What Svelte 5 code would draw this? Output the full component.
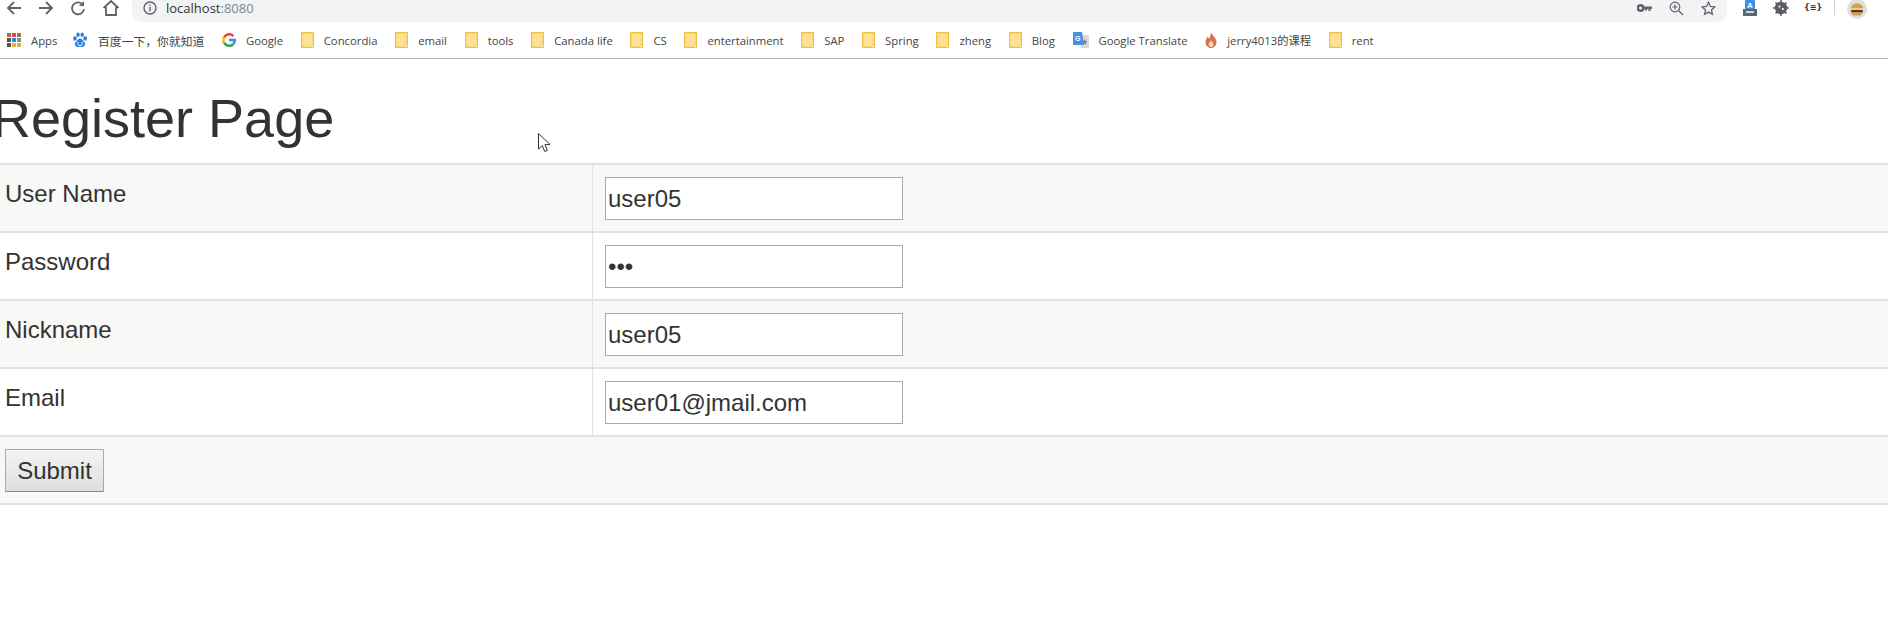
<script>
  const bookmarks = [
    { label: 'Apps', icon: 'apps' },
    { label: '百度一下，你就知道', icon: 'baidu', cjk: true },
    { label: 'Google', icon: 'google' },
    { label: 'Concordia', icon: 'folder' },
    { label: 'email', icon: 'folder' },
    { label: 'tools', icon: 'folder' },
    { label: 'Canada life', icon: 'folder' },
    { label: 'CS', icon: 'folder' },
    { label: 'entertainment', icon: 'folder' },
    { label: 'SAP', icon: 'folder' },
    { label: 'Spring', icon: 'folder' },
    { label: 'zheng', icon: 'folder' },
    { label: 'Blog', icon: 'folder' },
    { label: 'Google Translate', icon: 'translate' },
    { label: 'jerry4013的课程', icon: 'flame' },
    { label: 'rent', icon: 'folder' }
  ];

  const appDots = ['#b9614c', '#c9543f', '#b9614c', '#555', '#3b82d6', '#6d9c8a', '#555', '#e0b040', '#e0b040'];

  const fields = [
    { label: 'User Name', type: 'text', value: 'user05' },
    { label: 'Password', type: 'password', value: '123' },
    { label: 'Nickname', type: 'text', value: 'user05' },
    { label: 'Email', type: 'text', value: 'user01@jmail.com' }
  ];
</script>

<div class="chrome">
  <div class="toolbar">
    <div class="nav">
      <svg width="16" height="16" viewBox="0 0 16 16" fill="none" stroke="#5f6368" stroke-width="1.8"><path d="M15 8H2M8 2L2 8l6 6" /></svg>
      <svg width="16" height="16" viewBox="0 0 16 16" fill="none" stroke="#5f6368" stroke-width="1.8"><path d="M1 8h13M8 2l6 6-6 6" /></svg>
      <svg width="16" height="16" viewBox="0 0 16 16" fill="none" stroke="#5f6368" stroke-width="1.8"><path d="M13 5a6 6 0 1 0 1 4" /><path d="M14 1v5H9" fill="#5f6368" stroke="none" /></svg>
      <svg width="18" height="16" viewBox="0 0 18 16" fill="none" stroke="#5f6368" stroke-width="1.8"><path d="M1.500 8L9 1l7.500 7M4 7v8h10V7" /></svg>
    </div>
    <div class="omnibox">
      <svg width="14" height="14" viewBox="0 0 14 14" fill="none" stroke="#5f6368" stroke-width="1.4"><circle cx="7" cy="7" r="6" /><path d="M7 6v4.500M7 3.400v1.400" /></svg>
      <span class="url">localhost<span class="port">:8080</span></span>
      <div class="omni-actions">
        <svg width="15" height="14" viewBox="0 -2 15 14" fill="#5f6368"><path d="M3.500 1a4 4 0 1 1 0 8 4 4 0 0 1 0-8zm0 2.500a1.500 1.500 0 1 0 0 3 1.500 1.500 0 0 0 0-3zM7 3.500h8v2.500h-1.500v2h-2v-2h-1.500v1.500H8z" /></svg>
        <svg width="15" height="15" viewBox="0 0 15 15" fill="none" stroke="#5f6368" stroke-width="1.2"><circle cx="6" cy="6" r="4.800" /><path d="M6 3.500v5M3.500 6h5M9.500 9.500L14 14" /></svg>
        <svg width="15" height="15" viewBox="0 0 15 15" fill="none" stroke="#5f6368" stroke-width="1.300"><path d="M7.500 1.300l1.900 4.100 4.400.5-3.300 3 .9 4.400-3.900-2.200-3.900 2.200.9-4.400-3.300-3 4.400-.5z" /></svg>
      </div>
    </div>
    <div class="extensions">
      <svg width="16" height="18" viewBox="0 0 16 18">
        <rect x="3" y="0" width="10" height="9" rx="1" fill="#3d8fe0" />
        <text x="8" y="8" class="ext-a" text-anchor="middle">A</text>
        <path d="M1 9h14v7H1z" fill="#5b6670" />
        <path d="M4 11h8v2H4z" fill="#cfd4d8" />
      </svg>
      <svg width="16" height="16" viewBox="0 0 16 16" fill="#5a5e62">
        <circle cx="8" cy="8" r="6.200" />
        <path d="M8 0v16M0 8h16M2.500 2.500l11 11M13.500 2.500l-11 11" stroke="#5a5e62" stroke-width="1.600" />
        <circle cx="6.500" cy="6.500" r="1.100" fill="#fff" />
        <circle cx="9.800" cy="9" r="1.100" fill="#fff" />
      </svg>
      <span class="json-ext">{'{≡}'}</span>
      <span class="ext-sep"></span>
      <span class="avatar">
        <svg width="14" height="13" viewBox="0 0 14 13">
          <path d="M1 5c0-3 3-4.500 6-4.500S13 2 13 5z" fill="#d99a4a" />
          <rect x="1" y="5" width="12" height="2" fill="#e8d27a" />
          <rect x="1" y="7" width="12" height="2.500" rx="1" fill="#5a3426" />
          <path d="M1.500 9.500h11c0 2-1.500 3-3 3h-5c-1.500 0-3-1-3-3z" fill="#d99a4a" />
        </svg>
      </span>
    </div>
  </div>

  <div class="bookmarks">
    {#each bookmarks as b}
      <div class="bookmark">
        {#if b.icon === 'folder'}
          <svg width="13" height="16" viewBox="0 0 13 16">
            <path d="M.7.7h11.600v14.600H.7z" fill="#fde293" stroke="#f0c040" stroke-width="1.300" />
            <path d="M10 13h2.500v2.500H10z" fill="#fff" stroke="#f0c040" stroke-width=".8" />
          </svg>
        {:else if b.icon === 'apps'}
          <div class="apps-grid">
            {#each appDots as c}
              <i style="background: {c}"></i>
            {/each}
          </div>
        {:else if b.icon === 'baidu'}
          <svg width="16" height="16" viewBox="0 0 16 16" fill="#2f7fd8">
            <ellipse cx="3" cy="6.500" rx="1.800" ry="2.300" />
            <ellipse cx="6" cy="2.800" rx="1.700" ry="2.300" />
            <ellipse cx="10.200" cy="2.800" rx="1.700" ry="2.300" />
            <ellipse cx="13.200" cy="6.500" rx="1.800" ry="2.300" />
            <path d="M8 6.500c2 0 2.500 2 4 3.200 2 1.700 1 5.300-2 5.300-1 0-1.300-.3-2-.3s-1 .3-2 .3c-3 0-4-3.600-2-5.300C5.500 8.500 6 6.500 8 6.500z" />
            <path d="M6 10v2.500c0 1.500 4 1.500 4 0V10" fill="none" stroke="#fff" stroke-width="1" />
          </svg>
        {:else if b.icon === 'google'}
          <svg width="14" height="14" viewBox="0 0 14 14" fill="none" stroke-width="2.600">
            <path d="M11.300 3.100A5.700 5.700 0 0 0 2.100 4.300" stroke="#ea4335" />
            <path d="M2.100 4.300a5.700 5.700 0 0 0 0 5.400" stroke="#fbbc05" />
            <path d="M2.100 9.700a5.700 5.700 0 0 0 9 1.500" stroke="#34a853" />
            <path d="M11.100 11.200A5.700 5.700 0 0 0 12.700 7H7" stroke="#4285f4" />
          </svg>
        {:else if b.icon === 'translate'}
          <svg width="16" height="16" viewBox="0 0 16 16">
            <path d="M6 3h10v13H8z" fill="#d8d8d8" />
            <path d="M11.500 7l.8 2 2 .2-1.500 1.300.5 2-1.800-1-1.800 1 .5-2-1.500-1.300 2-.2z" fill="#777" />
            <path d="M1 0h8l2 13H1a1 1 0 0 1-1-1V1a1 1 0 0 1 1-1z" fill="#4a8fe7" />
            <text x="4.800" y="8.500" class="ext-g" text-anchor="middle">G</text>
          </svg>
        {:else if b.icon === 'flame'}
          <svg width="12" height="16" viewBox="0 0 12 16">
            <path d="M6 0c.5 3 5.500 5.500 5.500 10 0 3.500-2.500 6-5.500 6s-5.500-2.500-5.500-6c0-2.500 1.500-3.500 2-5.500C3.500 5.500 4 6.500 4.200 7 5 5 5.800 2.500 6 0z" fill="#d9734e" />
            <path d="M6 8c.3 1.500 2.300 2.500 2.300 4.500S7.300 15 6 15s-2.300-1-2.300-2.500S5.700 9.500 6 8z" fill="#f6d9c8" />
          </svg>
        {/if}
        <span class:cjk={b.cjk}>{b.label}</span>
      </div>
    {/each}
  </div>
</div>

<div class="page">
  <h1>Register Page</h1>
  <table>
    <tbody>
      {#each fields as f}
        <tr>
          <td class="label-cell">{f.label}</td>
          <td class="input-cell"><input type={f.type} value={f.value} /></td>
        </tr>
      {/each}
      <tr>
        <td colspan="2" class="submit-cell"><button type="button">Submit</button></td>
      </tr>
    </tbody>
  </table>
</div>

<svg class="cursor" width="13" height="20" viewBox="0 0 13 20">
  <path d="M.5.500v15.500l3.800-3.400 2.400 5.900 2.700-1.100-2.500-5.700 5.100-.3z" fill="#fff" stroke="#333" stroke-width="1" />
</svg>

<style>
  :global(body) {
    background: #fff;
    color: #333;
    font-family: "Liberation Sans", Arial, sans-serif;
  }

  .chrome {
    font-family: "Open Sans", "Noto Sans CJK SC", sans-serif;
    border-bottom: 1px solid #b4b4b4;
  }

  .toolbar {
    display: flex;
    height: 22px;
    overflow: hidden;
  }

  .nav {
    display: flex;
    width: 132px;
    flex: none;
    gap: 16px;
    padding-left: 6px;
    box-sizing: border-box;
  }

  .omnibox {
    flex: none;
    width: 1595px;
    height: 22px;
    background: #f1f3f4;
    border-radius: 0 0 11px 11px;
    display: flex;
    align-items: flex-start;
    padding: 1px 11px 0 11px;
    box-sizing: border-box;
    gap: 9px;
  }

  .url {
    font-size: 13px;
    line-height: 15px;
    color: #333;
  }

  .port {
    color: #80868b;
  }

  .omni-actions {
    margin-left: auto;
    display: flex;
    gap: 17px;
    align-items: flex-start;
  }

  .extensions {
    flex: 1;
    display: flex;
    align-items: flex-start;
    gap: 15px;
    padding-left: 15px;
  }

  .ext-a {
    fill: #fff;
    font: bold 8px "Liberation Sans", sans-serif;
  }

  .ext-g {
    fill: #fff;
    font: bold 7px "Liberation Sans", sans-serif;
  }

  .json-ext {
    width: 15px;
    text-align: center;
    font: bold 8px/16px "DejaVu Sans", sans-serif;
    color: #333;
  }

  .ext-sep {
    width: 1px;
    height: 15px;
    background: #d0d3d6;
  }

  .avatar {
    width: 20px;
    height: 20px;
    border-radius: 50%;
    background: #dfdfdf;
    margin-top: -1px;
    margin-left: -3px;
    display: flex;
    align-items: center;
    justify-content: center;
  }

  .bookmarks {
    height: 36px;
    display: flex;
    align-items: center;
    gap: 17.7px;
    padding-left: 7px;
    font-size: 11.3px;
    color: #444;
  }

  .bookmark {
    display: flex;
    align-items: center;
    gap: 10px;
    white-space: nowrap;
  }

  .bookmark:first-child {
    margin-right: -3px;
  }

  .cjk {
    font-size: 11.8px;
  }

  .apps-grid {
    display: grid;
    grid-template-columns: repeat(3, 4px);
    grid-auto-rows: 4px;
    gap: 1px;
  }

  .apps-grid i {
    display: block;
  }

  .page h1 {
    font-size: 54px;
    font-weight: normal;
    line-height: 62px;
    margin: 0 0 0 -8px;
    padding: 28px 0 14px;
    color: #333;
  }

  table {
    width: 100%;
    border-collapse: collapse;
    font-size: 24px;
  }

  tr {
    border-top: 2px solid #e2e2e0;
    border-bottom: 2px solid #e2e2e0;
  }

  tr:nth-child(odd) {
    background: #f8f8f6;
  }

  td {
    padding: 12px 5px 11px;
    vertical-align: top;
  }

  .label-cell {
    width: 582px;
    border-right: 1px solid #e2e2e0;
    line-height: 33px;
  }

  .input-cell {
    padding-left: 12px;
  }

  input {
    display: block;
    width: 298px;
    height: 43px;
    box-sizing: border-box;
    border: 1px solid #aaa;
    padding: 0 2px;
    margin: 0;
    font: 24px "Liberation Sans", Arial, sans-serif;
    color: #333;
    background: #fff;
    border-radius: 0;
    outline: none;
  }

  button {
    display: block;
    width: 99px;
    height: 43px;
    padding: 0;
    font: 24px "Liberation Sans", Arial, sans-serif;
    color: #333;
    border: 1px solid #aaa;
    border-bottom-color: #888;
    background: linear-gradient(#f4f4f4, #dedede);
    border-radius: 1px;
  }

  .cursor {
    position: absolute;
    left: 538px;
    top: 133px;
  }
</style>
